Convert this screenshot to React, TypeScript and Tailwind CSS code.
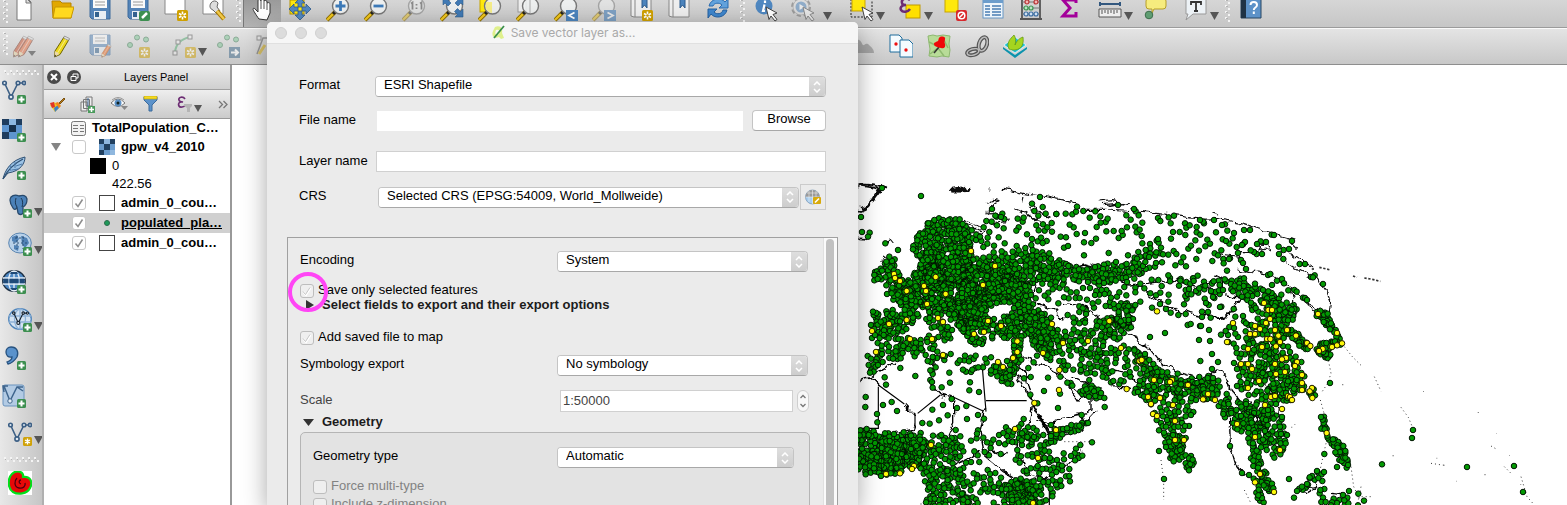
import React, { ReactNode } from "react";

/* ------------------------------------------------------------------ */
/* Map data                                                            */
/* ------------------------------------------------------------------ */

type Pt = [number, number];

function toPoints(flat: number[], dx = 0): Pt[] {
  const out: Pt[] = [];
  for (let i = 0; i < flat.length; i += 2) out.push([flat[i] + dx, flat[i + 1]]);
  return out;
}

function inside(x: number, y: number, poly: Pt[]): boolean {
  let hit = false;
  for (let i = 0, j = poly.length - 1; i < poly.length; j = i++) {
    const [xi, yi] = poly[i];
    const [xj, yj] = poly[j];
    if (yi > y !== yj > y && x < ((xj - xi) * (y - yi)) / (yj - yi) + xi) hit = !hit;
  }
  return hit;
}

function makeRandom(seed: number) {
  let s = seed;
  return () => {
    s = (s * 1664525 + 1013904223) % 4294967296;
    return s / 4294967296;
  };
}

const EAST = 1050;

/* Each region: outline, number of places, smallest spacing, x shift. */
const REGIONS: [number[], number, number, number?][] = [
  // Central and eastern Europe
  [[105, 345, 150, 335, 180, 310, 215, 290, 300, 280, 400, 280, 420, 290, 480, 310, 500, 350, 490, 380, 420, 400, 395, 420, 400, 445, 360, 490, 330, 470, 260, 420, 200, 420, 150, 400, 110, 375], 560, 5],
  [[212, 290, 212, 240, 260, 225, 300, 210, 350, 210, 365, 250, 400, 280, 300, 285], 110, 6],
  [[400, 255, 440, 260, 520, 250, 570, 238, 600, 260, 650, 285, 640, 340, 560, 330, 530, 350, 480, 350, 420, 300], 145, 7],
  [[420, 340, 520, 340, 545, 380, 520, 400, 560, 420, 590, 440, 600, 480, 560, 480, 510, 440, 480, 400, 430, 395], 130, 6],
  [[640, 285, 700, 290, 800, 285, 870, 280, 868, 318, 800, 330, 720, 335, 650, 320], 84, 7],
  // Turkey, Caucasus and Levant
  [[385, 450, 440, 450, 500, 430, 590, 440, 620, 490, 600, 540, 620, 590, 570, 550, 540, 500, 500, 500, 440, 500, 395, 505], 160, 6],
  [[485, 510, 512, 510, 505, 570, 485, 620], 24, 6],
  // Iberia and Italy
  [[63, 430, 180, 422, 205, 440, 170, 462, 150, 490, 100, 515, 65, 505], 72, 7],
  [[215, 425, 245, 425, 275, 455, 310, 485, 285, 518, 245, 475, 225, 465], 26, 6],
  [[320, 460, 365, 480, 405, 520, 370, 525, 340, 495], 28, 6],
  // British Isles
  [[100, 262, 130, 262, 150, 330, 130, 340, 105, 330], 30, 6],
  [[68, 305, 95, 290, 92, 330, 68, 330], 12, 6],
  // Scandinavia
  [[182, 215, 228, 160, 275, 140, 310, 145, 300, 175, 260, 230, 240, 290, 210, 290, 190, 250], 70, 7],
  [[285, 150, 340, 155, 370, 200, 345, 220, 280, 215, 270, 180], 42, 7],
  [[370, 205, 400, 160, 460, 135, 530, 150, 590, 160, 620, 180, 540, 250, 430, 255, 380, 240], 44, 12],
  // Siberia
  [[540, 95, 600, 120, 680, 112, 850, 122, 960, 140, 1080, 160, 1120, 300, 880, 290, 650, 240, 600, 190, 540, 140], 92, 11],
  [[1060, 150, 1180, 165, 1320, 205, 1300, 250, 1170, 250, 1160, 320, 1080, 310], 20, 18],
  // Kazakhstan and central Asia
  [[560, 330, 700, 335, 880, 320, 900, 350, 850, 400, 700, 430, 600, 410, 555, 380], 58, 11],
  [[760, 440, 810, 400, 860, 395, 850, 470, 800, 510, 750, 515], 62, 6],
  [[640, 410, 690, 420, 760, 460, 745, 510, 690, 500, 650, 460], 22, 8],
  // Iran and Pakistan
  [[580, 460, 630, 470, 690, 490, 750, 520, 755, 600, 680, 610, 630, 590, 560, 540], 74, 8],
  [[750, 510, 830, 510, 870, 545, 870, 590, 840, 645, 770, 650, 745, 580], 46, 8],
  // India and Sri Lanka
  [[840, 540, 880, 560, 930, 600, 1000, 620, 1080, 635, 1085, 690, 1040, 690, 920, 660, 880, 690, 850, 670, 870, 610], 135, 6],
  [[880, 670, 1040, 690, 1010, 770, 1000, 800, 930, 790, 905, 730], 56, 9],
  [[935, 790, 1000, 800, 1000, 830, 990, 870, 965, 872, 950, 840], 48, 6],
  [[1003, 853, 1018, 855, 1028, 880, 1012, 905, 1003, 890], 16, 5],
  // Western China and Mongolia
  [[890, 330, 960, 310, 1100, 340, 1180, 420, 1190, 480, 1100, 470, 1050, 460, 960, 440, 870, 440], 34, 15],
  [[950, 320, 1080, 320, 1130, 350, 1100, 380, 1000, 380], 28, 8],
  [[850, 260, 930, 200, 945, 240, 930, 290, 870, 300], 16, 9],
  // Eastern China
  [[60, 330, 110, 320, 180, 360, 240, 370, 290, 415, 270, 440, 160, 395, 90, 360], 74, 7, EAST],
  [[150, 400, 200, 390, 280, 420, 285, 440, 250, 480, 240, 520, 180, 560, 140, 520], 78, 8, EAST],
  [[70, 450, 140, 440, 150, 520, 130, 610, 100, 560, 60, 500], 20, 11, EAST],
  [[150, 520, 245, 515, 295, 570, 310, 650, 270, 690, 210, 695, 190, 620, 160, 580], 130, 7, EAST],
  [[100, 580, 190, 600, 210, 690, 150, 690, 110, 650], 34, 10, EAST],
  // Korea, Japan and Taiwan
  [[255, 480, 285, 485, 325, 530, 318, 545, 285, 515], 28, 6, EAST],
  [[345, 545, 360, 520, 400, 515, 405, 485, 425, 520, 390, 535, 380, 570, 352, 552], 46, 5, EAST],
  [[343, 424, 382, 425, 388, 450, 405, 488, 390, 480, 358, 445], 28, 6, EAST],
  [[324, 655, 338, 655, 342, 680, 322, 678], 7, 5, EAST],
  // South-east Asia
  [[0, 620, 50, 620, 60, 660, 40, 690, 0, 690], 36, 6, EAST],
  [[60, 670, 110, 700, 140, 690, 210, 720, 250, 770, 265, 820, 230, 862, 190, 830, 150, 820, 90, 750, 60, 720], 150, 6, EAST],
  [[143, 795, 158, 830, 188, 890, 222, 965, 195, 960, 155, 880], 42, 6, EAST],
  [[155, 925, 170, 925, 190, 1000, 175, 1000], 12, 8, EAST],
  [[358, 738, 372, 742, 383, 797, 415, 812, 448, 880, 438, 900, 400, 840, 364, 780], 40, 6, EAST],
  [[275, 980, 350, 905, 368, 912, 370, 1000, 355, 1000, 355, 920, 290, 985], 16, 8, EAST],
  [[385, 985, 420, 980, 570, 1000, 380, 1005], 12, 8, EAST],
  // Northern Africa
  [[40, 600, 75, 530, 150, 507, 250, 507, 258, 545, 200, 555, 140, 565, 90, 570, 50, 610], 70, 7],
  [[250, 548, 330, 560, 370, 552, 440, 572, 485, 570, 478, 600, 350, 605, 320, 585, 240, 568], 30, 8],
  [[430, 590, 485, 595, 480, 655, 440, 635], 18, 7],
  [[30, 610, 230, 570, 400, 610, 400, 780, 300, 790, 200, 770, 30, 770], 30, 20],
  [[230, 560, 255, 560, 250, 660, 235, 660], 9, 7],
  // Western Africa
  [[25, 775, 70, 792, 200, 795, 200, 880, 120, 908, 60, 918, 25, 895], 215, 6],
  [[190, 800, 310, 795, 330, 860, 290, 910, 220, 920, 190, 880], 84, 7],
  [[230, 905, 330, 900, 350, 1005, 225, 1005], 80, 7],
  // Eastern Africa
  [[330, 800, 430, 800, 520, 740, 545, 780, 520, 830, 400, 860, 340, 850], 38, 11],
  [[330, 860, 400, 880, 480, 930, 490, 1005, 330, 1005], 52, 9],
  [[470, 930, 540, 930, 560, 1005, 470, 1005], 84, 5],
  [[490, 770, 580, 770, 605, 850, 690, 835, 690, 870, 640, 940, 600, 1000, 560, 1000, 540, 930, 480, 870], 92, 8],
  // Arabia
  [[510, 570, 620, 600, 650, 640, 600, 720, 560, 720, 520, 670], 11, 20],
  [[640, 630, 690, 660, 720, 640, 758, 680, 745, 680, 700, 675], 24, 7],
  [[595, 765, 640, 775, 720, 755, 690, 780, 612, 810, 607, 845, 597, 830], 34, 6],
];

const LONE_PLACES: Pt[] = [
  ...toPoints([93, 54, 210, 78, 30, 141, 33, 186, 56, 188, 51, 200, 103, 220, 141, 240, 567, 81, 543, 101, 575, 111, 678, 110, 801, 105, 849, 117, 423, 117, 433, 137, 450, 141, 616, 132, 584, 131, 969, 137, 1047, 150, 924, 843, 939, 927, 723, 817, 688, 825, 694, 857, 657, 934, 761, 711, 760, 684, 715, 630, 755, 620, 690, 600, 232, 160, 250, 150, 384, 666, 276, 705, 318, 714, 348, 747, 621, 714, 692, 735, 897, 501, 942, 489, 1044, 510, 1010, 465, 1019, 462, 1047, 468, 982, 435, 1048, 573]),
  ...toPoints([39, 150, 63, 165, 147, 180, 219, 195, 273, 213, 99, 189, 132, 216, 195, 216, 168, 222, 75, 213, 123, 225, 183, 252, 159, 246, 149, 241, 234, 252, 247, 267, 248, 240, 264, 237, 296, 282, 312, 282, 341, 316, 330, 321, 336, 322, 366, 342, 111, 249, 120, 270, 126, 279, 135, 297, 84, 267, 201, 315, 208, 312, 228, 332, 243, 327, 249, 340, 213, 345, 262, 361, 280, 360, 287, 365, 306, 383, 312, 384, 318, 390, 387, 639, 360, 741, 243, 741, 636, 780, 633, 804, 543, 883, 798, 891, 939, 888, 966, 966, 472, 971, 444, 963, 426, 975, 370, 852, 408, 891, 348, 903, 369, 906, 333, 918, 318, 942, 87, 828, 123, 909, 264, 927, 144, 915, 33, 552, 51, 576, 99, 579, 33, 597, 27, 513, 24, 480, 0, 468, 21, 426, 57, 411, 15, 399, 36, 381, 326, 922, 303, 950, 288, 963], EAST),
];

const SELECTED_PLACES: Pt[] = [
  ...toPoints([360, 243, 432, 288, 129, 312, 132, 324, 147, 333, 254, 321, 219, 348, 225, 363, 167, 363, 284, 372, 396, 345, 228, 402, 261, 444, 276, 456, 167, 450, 114, 462, 63, 483, 177, 507, 243, 507, 75, 546, 276, 555, 411, 453, 450, 468, 369, 492, 399, 486, 499, 514, 499, 546, 486, 564, 441, 576, 456, 591, 576, 549, 636, 519, 711, 513, 603, 462, 625, 600, 624, 660, 550, 699, 775, 453, 810, 534, 865, 573, 872, 570, 918, 424, 909, 630, 963, 630, 957, 636, 1011, 645, 827, 657, 891, 681, 927, 684, 900, 702, 966, 705, 906, 732, 918, 738, 972, 753, 1056, 687, 1071, 672, 972, 810, 999, 810, 492, 777, 615, 780, 561, 864, 240, 825, 105, 912, 147, 910, 189, 888, 183, 897, 546, 999]),
  ...toPoints([189, 399, 202, 420, 213, 420, 207, 447, 195, 459, 162, 468, 177, 477, 222, 480, 258, 480, 96, 459, 147, 492, 162, 492, 232, 497, 285, 497, 198, 507, 208, 507, 237, 516, 78, 516, 183, 531, 225, 529, 141, 537, 318, 519, 328, 528, 255, 564, 243, 568, 288, 576, 282, 588, 120, 582, 141, 582, 222, 582, 153, 597, 252, 606, 225, 612, 303, 615, 174, 633, 303, 639, 141, 654, 303, 660, 210, 681, 222, 678, 261, 678, 267, 681, 273, 690, 192, 705, 243, 717, 333, 654, 326, 664, 334, 684, 351, 432, 408, 489, 423, 520, 408, 526, 393, 531, 365, 537, 354, 543, 21, 672, 6, 688, 42, 690, 108, 762, 162, 801, 237, 840, 177, 912, 162, 937, 219, 966, 377, 789], EAST),
];

function buildPlaces(): Pt[] {
  const rnd = makeRandom(54009);
  const out: Pt[] = [];
  for (const [flat, count, gap, dx] of REGIONS) {
    const poly = toPoints(flat, dx ?? 0);
    const xs = poly.map((p) => p[0]);
    const ys = poly.map((p) => p[1]);
    const x0 = Math.min(...xs);
    const x1 = Math.max(...xs);
    const y0 = Math.min(...ys);
    const y1 = Math.max(...ys);
    // small, narrow regions keep a crisp edge; large ones get a ragged one
    const spread = Math.min(22, (x1 - x0) / 8);
    const here: Pt[] = [];
    for (let tries = 0; tries < count * 20 && here.length < count; tries++) {
      const x = x0 + rnd() * (x1 - x0);
      const y = y0 + rnd() * (y1 - y0);
      if (!inside(x, y, poly)) continue;
      const px = Math.round(x + (rnd() - 0.5) * spread);
      const py = Math.round(y + (rnd() - 0.5) * spread);
      if (here.some(([a, b]) => (a - px) ** 2 + (b - py) ** 2 < gap * gap)) continue;
      here.push([px, py]);
    }
    out.push(...here);
  }
  return out;
}

const PLACES = [...buildPlaces(), ...LONE_PLACES];

function MapView() {
  return (
    <svg
      width="1336"
      height="440"
      viewBox="-1857 -315 4008 1320"
      className="block shrink-0"
      role="img"
      aria-label="World map of populated places"
    >
      <defs>
        <filter id="ragged" x="-1857" y="-315" width="4008" height="1320" filterUnits="userSpaceOnUse">
          <feTurbulence type="fractalNoise" baseFrequency="0.035" numOctaves="3" seed="7" result="n" />
          <feDisplacementMap in="SourceGraphic" in2="n" scale="26" xChannelSelector="R" yChannelSelector="G" />
        </filter>
      </defs>
      {/* straight desert borders */}
      <path d="M82 650v125H25M82 645l78 57M192 730v45M268 675l-68 55M300 678l96 45M393 580l12 145M405 692h122M595 930v75" fill="none" stroke="#000" strokeWidth="3.500" />
      <g fill="none" stroke="#000" strokeWidth="4" strokeLinejoin="round" filter="url(#ragged)">
        {/* country borders */}
        <path d="M160 702l30 32M268 675l34 8M192 760l-4 15-60 10M268 675l-28-30 8-90M308 680v75l-20 45M405 715l-6 10-12 60 14 70 60 50 30 20M310 885l50-25 30-20M405 855l10-12 40 14 15-10M25 632l35-8 25-20 50-30M60 625l25 25" />
        <path d="M495 560l30 60 20 80 40 70 20 40M510 560l70 30 50 20 50 80 40-10v40l-28 15-55 10-30 15-45-2M640 630l40 35 25 20M490 600l60 110 45 90M692 735l12 30-14 20M600 805l80-20 60-65M545 930l30 5 70-50 45-40M545 700l-10 60-40 70 40 85 60 15" />
        <path d="M555 345l-12 30 20 30M560 400l50 20 20 30M640 400l60 10 60 45M625 445l15 5 5-15zM650 300l50-15 70 20 60 40 60-5 70-10 80 20 40-10M850 350l30 10 60 45 70 25 70 14 60-8M830 490l60 40 40 50 50 25 60 20 45 2M745 530l25 65 40 10 45 25M870 660l-30-50M750 595l35 40M660 620l90 35M780 650l60 5" />
        <path d="M1070 630l30-30 25 10 15 50 30 40M1050 355l35-5M1095 315l20 10v25M1120 375l50 10-40 55-60 5M1250 420l5-40M1190 700l30 60M1135 720l3 110 15 50 25 40M1350 960l40-8 10-30M1340 960l30 8 20-12M1440 970l40 5" />
      </g>
      <g fill="none" stroke="#111" strokeWidth="3.500" strokeLinejoin="round" filter="url(#ragged)">
        {/* coasts */}
        <path d="M25 42l45 4 36 8-24 6-18 28-22 24-17 12M25 46l60 10M88 60l-30 40-28 14M25 122l20-8 16-20M25 205l18 2 14-14" strokeWidth="5" />
        <path d="M300 60l22-4 14 6 20-6M320 54l32 8M326 64l18-8M310 62l36-4" strokeWidth="6" />
        <path d="M410 56l8 8M455 58l60 12 60 8 70 14 22 8 20 16M516 78l-4 26M405 100l22-12 14 4-26 16-4 18 24 12 26 6M490 116l40 18 40 26M508 120l45 32M535 118l22 6 42 18M330 150l68 24-8 16-60-14M340 160l44 22M420 160l60-10M545 100l28 30 24 6" />
        <path d="M746 96l36-4 58 10M756 104l50-4M775 108l44-8M700 118l64 0M768 120l90 6 60 4M840 120l78 10 80 10 50 8M1050 148l50-2 60 10 110 36 60 18M1084 132l20 6M1316 216l20 20M1160 248h40M1216 222l40 26-5-24zM1295 235l45 30 48 28M1296 272l60 34 42 20 18 22M1412 345l20 25 10 20-4 42-18 12" />
        <path d="M1110 252l56 8 20 40 70 14 50 30 66 60 30 10M1166 300l40 8M1092 318l60 20M1318 362l20 66-14 10M1400 430l-30-24M1284 700l-4 34 16 10" />
        <path d="M92 268l14-6M96 258l20 14M100 276l-12-4M98 220l16-10 10 12M215 180l20 50-10 50M260 150l-40 70" />
      </g>
      <g fill="none" stroke="#333" strokeWidth="3">
        <path d="M1405 292l34 8M1506 318l12 4M1540 324l24 4 24 6" strokeDasharray="7 5" strokeWidth="5" />
        <path d="M1480 530l24 30 26 26M1570 620l20 44M1650 712l22 30 16 38M1430 560l10 50-10 30-20 30M1134 770l6 70 20 50M1408 690l14 50M1500 890l8 60 20 40M930 870l8 60v60M1530 950l-10 50M2010 920l18 60 22 25M640 815h80M1920 828l14 8M1740 880l40 6M1180 960l20 40M1520 980h40M1960 890l20 20M1425 820l-20 90" strokeDasharray="3 9" />
      </g>
      <g fill="#888">
        <path d="M1473 642h4v4h-4zM1716 663h3v3h-3zM1880 726h4v3h-4zM1624 856h5v3h-5zM1776 884h5v3h-5zM1900 912h4v4h-4zM1756 863h3v3h-3zM1935 790h2v2h-2zM1815 932h2v3h-2zM2007 942h4v2h-4zM1974 856h3v2h-3zM1320 770h4v3h-4zM1330 762h3v3h-3zM208 1000h4v4h-4z" />
      </g>
      <g fill="#029a02" stroke="#031503" strokeWidth="3">
        {PLACES.map(([x, y], i) => (
          <circle key={i} cx={x} cy={y} r="8.3" />
        ))}
      </g>
      {/* borders that stay visible over crowded areas */}
      <g fill="none" stroke="#061006" strokeWidth="4" opacity="0.75" filter="url(#ragged)">
        <path d="M215 300l30-20 20 10 20 30-10 30-30 10-20-20zM260 330l60 10 30-20 40 30-20 40-50 10-40-20M180 360l40 20-10 30M300 250l40 10 20 30-30 20M380 380l60-10 40 20M450 300l50 40 40-10M240 230l20 60M290 400l40 40 50 10M330 430l20 50M120 850l10 60M160 800v90M85 810l10 90M50 850l40-5M230 820l-30 70M500 930l30 30-20 30M900 610l80 25 80 10M960 660l30 30M1180 720l40 20 30 50M1200 620l60 40M780 450l30 20 40-10M790 440l10 40" />
      </g>
      <g fill="#fdf90a" stroke="#201c00" strokeWidth="3">
        {SELECTED_PLACES.map(([x, y], i) => (
          <circle key={i} cx={x} cy={y} r="8.3" />
        ))}
      </g>
    </svg>
  );
}

/* ------------------------------------------------------------------ */
/* Icons (24 x 24)                                                     */
/* ------------------------------------------------------------------ */

function Icon({ children, faded = false }: { children: ReactNode; faded?: boolean }) {
  return (
    <svg width="24" height="24" viewBox="0 0 24 24" fill="none" aria-hidden="true" className={faded ? "shrink-0 opacity-50" : "shrink-0"}>
      {children}
    </svg>
  );
}

const Plus = ({ x = 15, y = 15 }: { x?: number; y?: number }) => (
  <g>
    <rect x={x} y={y} width="9" height="9" rx="1.5" fill="#3d8f50" />
    <path d={`M${x + 4.5} ${y + 1.5}v6M${x + 1.5} ${y + 4.5}h6`} stroke="#fff" strokeWidth="2" />
  </g>
);

const Star = ({ x = 13, y = 13 }: { x?: number; y?: number }) => (
  <g>
    <rect x={x} y={y} width="11" height="11" rx="1.5" fill="#cfa000" />
    <path
      d={`M${x + 5.5} ${y + 1.5}v8M${x + 2} ${y + 3.5}l7 4M${x + 9} ${y + 3.5}l-7 4`}
      stroke="#fff"
      strokeWidth="1.6"
    />
    <circle cx={x + 5.5} cy={y + 5.5} r="1.3" fill="#cfa000" />
  </g>
);

const Floppy = () => (
  <g>
    <path d="M2 1h20v20H4l-2-2z" fill="#5484b8" stroke="#3d6a9c" />
    <rect x="5" y="1" width="14" height="9" fill="#fafafa" />
    <path d="M7 4h10M7 7h10" stroke="#9a9a9a" />
    <rect x="6" y="13" width="12" height="8" fill="#e8eef4" />
    <rect x="7" y="14" width="4" height="5" fill="#33628f" />
  </g>
);

const Lens = ({ children }: { children?: ReactNode }) => (
  <g>
    <path d="M9 14l-8 8" stroke="#8b6a00" strokeWidth="4" />
    <path d="M8 15l-7 7" stroke="#f2c81e" strokeWidth="2.4" />
    <path d="M10 13l-3 3" stroke="#222" strokeWidth="3" />
    <circle cx="14.5" cy="8" r="8" fill="#f1f3f3" fillOpacity="0.85" stroke="#777" strokeWidth="1.4" />
    {children}
  </g>
);

const Cursor = () => <path d="M12 9l11 6-4 1.5 4 5-2 1.5-4-5-2 3.5z" fill="#fff" stroke="#444" />;

const Pencil = ({ fill, edge }: { fill: string; edge: string }) => (
  <g>
    <path d="M14 3l5 2.500-9 15-5.500 2.500.5-6z" fill={fill} stroke={edge} />
    <path d="M16.500 4L7.500 19" stroke="#fff" strokeOpacity="0.5" />
    <path d="M14.500 2l5 2.500-1 2-5-2.500z" fill="#ddd" stroke="#777" strokeWidth="0.6" />
    <path d="M5 17l4.500 3L4.500 23z" fill="#ecd9a8" />
    <path d="M4.700 20.500L4.500 23l2-1z" fill="#333" />
  </g>
);

const VNodes = ({ stroke = "#3c5f85" }: { stroke?: string }) => (
  <g stroke={stroke} strokeWidth="1.6" fill="#dfe8f0">
    <path d="M2.500 3l6.500 14L16 3h6" fill="none" />
    <circle cx="2.500" cy="3" r="1.800" />
    <circle cx="16" cy="3" r="1.800" />
    <circle cx="22" cy="3" r="1.600" />
    <circle cx="9" cy="17" r="2.100" />
  </g>
);

const Checker = () => (
  <g>
    <rect x="0" y="1" width="20" height="20" fill="#5e95cf" />
    <path d="M7 1h7v6H7z" fill="#8db8e2" />
    <path d="M0 1h7v6H0zM14 1h6v6h-6zM0 14h7v7H0z" fill="#1f3d5e" />
    <path d="M7 7h7v7H7z" fill="#16304c" />
    <path d="M0 7h7v7H0zM7 14h7v7H7z" fill="#5e95cf" />
  </g>
);

const GlobeGrid = ({ fill, line, edge }: { fill: string; line: string; edge: string }) => (
  <g stroke={line} strokeWidth="1.300">
    <ellipse cx="12" cy="11" rx="11.300" ry="10.300" fill={fill} stroke={edge} />
    <path d="M1 8h22M1 14h22M12 1v20" />
    <ellipse cx="12" cy="11" rx="5.500" ry="10" fill="none" />
  </g>
);

const Caret = () => (
  <svg width="9" height="8" viewBox="0 0 9 8" aria-hidden="true" className="shrink-0">
    <path d="M0 0h9L4.500 8z" fill="#555" />
  </svg>
);

/* ------------------------------------------------------------------ */
/* Toolbars                                                            */
/* ------------------------------------------------------------------ */

function Tool({ label, children, faded, active }: { label: string; children: ReactNode; faded?: boolean; active?: boolean }) {
  return (
    <button
      type="button"
      aria-label={label}
      className={
        active
          ? "flex h-full w-[38px] shrink-0 items-end justify-center border-l border-[#777] bg-gradient-to-b from-[#9a9a9a] to-[#b4b4b4] pb-[5px]"
          : "flex h-full w-[38px] shrink-0 items-end justify-center pb-[5px]"
      }
    >
      <Icon faded={faded}>{children}</Icon>
    </button>
  );
}

const DROP_SIZES = {
  normal: "flex h-full w-12 shrink-0 items-end gap-0.5 pb-[5px] pl-2.5",
  wide: "flex h-full w-[55px] shrink-0 items-end gap-2 pb-[5px] pl-1.5",
  inset: "flex h-full w-[52px] shrink-0 items-end gap-0.5 pb-[5px] pl-[15px]",
};

function DropTool({ label, children, faded, size = "normal" }: { label: string; children: ReactNode; faded?: boolean; size?: keyof typeof DROP_SIZES }) {
  return (
    <button type="button" aria-label={label} className={DROP_SIZES[size]}>
      <Icon faded={faded}>{children}</Icon>
      <span className="pb-0.5">
        <Caret />
      </span>
    </button>
  );
}

function GripV() {
  return (
    <svg width="10" height="28" viewBox="0 0 10 28" aria-hidden="true" className="shrink-0">
      {[2, 8, 14, 20].map((y) => (
        <g key={y}>
          <rect x="3" y={y - 2} width="2" height="2" fill="#f4f4f4" />
          <rect x="6" y={y + 1} width="2" height="2" fill="#f4f4f4" />
          <rect x="4" y={y - 1} width="2" height="1" fill="#b4b4b4" />
        </g>
      ))}
    </svg>
  );
}

function GripH() {
  return (
    <svg width="38" height="8" viewBox="0 0 38 8" aria-hidden="true" className="shrink-0">
      {[1, 7, 13, 19, 25, 31].map((x) => (
        <g key={x}>
          <rect x={x + 1} y="1" width="2" height="2" fill="#f4f4f4" />
          <rect x={x + 4} y="4" width="2" height="2" fill="#f4f4f4" />
          <rect x={x + 2} y="3" width="1" height="1" fill="#b4b4b4" />
        </g>
      ))}
    </svg>
  );
}

function MainToolbar() {
  return (
    <div role="toolbar" aria-label="Main" className="flex h-7 shrink-0 items-end overflow-hidden border-b border-[#9b9b9b] bg-gradient-to-b from-[#d6d6d6] to-[#c6c6c6]">
      <div className="flex h-full w-[5px] shrink-0"><GripV /></div>
      <Tool label="New project">
        <path d="M5 0h10l4 4v18H5z" fill="#fff" stroke="#777" />
        <path d="M14 0v5h5z" fill="#ddd" stroke="#777" />
      </Tool>
      <Tool label="Open project">
        <path d="M2 3h8l2 2h9v15H3z" fill="#e2a800" stroke="#b98500" />
        <path d="M5 9h19l-3 11H3z" fill="#ffd91f" stroke="#c99700" />
      </Tool>
      <Tool label="Save project"><Floppy /></Tool>
      <Tool label="Save project as">
        <Floppy />
        <rect x="13" y="13" width="11" height="10" rx="2" fill="#3d8f50" />
        <path d="M16 20l5-5" stroke="#fff" strokeWidth="2.500" />
      </Tool>
      <Tool label="New print layout">
        <path d="M1 0h20v16H1z" fill="#fff" stroke="#888" />
        <Star x={13} y={12} />
      </Tool>
      <Tool label="Layout manager">
        <path d="M1 0h20v16H1z" fill="#fff" stroke="#888" />
        <path d="M9 5a4 4 0 0 1 7 0l-1 4 3 4-3 3-4-4c-3-1-4-4-2-7z" fill="#ddd" stroke="#666" />
        <path d="M15 13l7 8" stroke="#a97b00" strokeWidth="4.500" />
        <path d="M15 13l7 8" stroke="#f0c84a" strokeWidth="2.500" />
      </Tool>
      <GripV />
      <Tool label="Pan map" active>
        <path d="M8 21c-3-4-6-9-6-10s2-1 3 1l2 2V3c0-2 2-2 3 0V1c0-1 3-1 3 0v2c1-1 3-1 3 1v1c2-1 3 0 3 1v9l-3 7z" fill="#fff" stroke="#333" />
        <path d="M10 3v8M13 3v8M16 5v7" stroke="#555" />
      </Tool>
      <Tool label="Pan to selection">
        <rect x="2" y="2" width="14" height="14" fill="#ffe80c" stroke="#b39200" />
        <g transform="translate(1 0)" fill="#5288c0" stroke="#2d5b8c" strokeWidth="0.800">
          <path d="M11 0l5 5h-3v4H9V5H6zM11 22l5-5h-3v-4H9v4H6zM0 11l5-5v3h4v4H5v3zM22 11l-5-5v3h-4v4h4v3z" />
        </g>
      </Tool>
      <Tool label="Zoom in"><Lens><path d="M14.500 3v10M9.500 8h10" stroke="#3d7ab8" strokeWidth="2.800" /></Lens></Tool>
      <Tool label="Zoom out"><Lens><path d="M9.500 8h10" stroke="#3d7ab8" strokeWidth="2.800" /></Lens></Tool>
      <Tool label="Zoom to native resolution" faded>
        <Lens>
          <path d="M9 5.500l1.500-1V11.500M18 5.500l1.500-1V11.500M14.500 6v1.500M14.500 9.500v1.500" stroke="#444" strokeWidth="1.800" />
        </Lens>
      </Tool>
      <Tool label="Zoom full">
        <Lens />
        <path d="M3 0h7l-2 2 3 3-3 3-3-3-2 2zM23 0v7l-2-2-3 3-3-3 3-3-2-2zM23 19h-8l2.500-2.500-3-3 3-3 3 3L23 11z" fill="#4079b4" stroke="#2c5a8a" strokeWidth="0.600" />
      </Tool>
      <Tool label="Zoom to selection"><rect x="2" y="0" width="8" height="14" fill="#ffe80c" stroke="#c5a400" /><Lens><path d="M8 4h6v11a8 8 0 0 1-6-5z" fill="#f4ec8a" /></Lens></Tool>
      <Tool label="Zoom to layer"><rect x="2" y="0" width="8" height="14" fill="#eee" stroke="#999" /><Lens><path d="M14 1v14" stroke="#aaa" /></Lens></Tool>
      <Tool label="Zoom last"><Lens /><rect x="12" y="12" width="12" height="11" fill="#4c84bd" /><path d="M20.500 14.500L15 17.500l5.500 3" stroke="#fff" strokeWidth="1.800" /></Tool>
      <Tool label="Zoom next" faded><Lens /><rect x="12" y="12" width="12" height="11" fill="#2f73b8" /><path d="M15.500 14.500l5.500 3-5.500 3" stroke="#fff" strokeWidth="1.800" /></Tool>
      <Tool label="New bookmark"><path d="M1 0h20v19H4l-3-1z" fill="#eee" stroke="#888" /><path d="M5 0v19" stroke="#888" /><path d="M12 0h5v10l-2.500-3L12 10z" fill="#4c84bd" stroke="#2d5b8c" /><Star x={12} y={12} /></Tool>
      <Tool label="Show bookmarks"><path d="M1 0h20v19H4l-3-1z" fill="#eee" stroke="#888" /><path d="M5 0v19" stroke="#888" /><path d="M12 0h5v10l-2.500-3L12 10z" fill="#4c84bd" stroke="#2d5b8c" /></Tool>
      <Tool label="Refresh">
        <path d="M3 8c2-8 12-9 16-4l3-3v9h-9l3-3c-3-3-8-2-9 1z" fill="#62a2dc" stroke="#2b6cb0" />
        <path d="M21 12c-2 8-12 9-16 4l-3 4v-9h9l-3 3c3 3 8 2 9-2z" fill="#3f86cc" stroke="#2560a0" />
      </Tool>
      <GripV />
      <Tool label="Identify features"><circle cx="10" cy="8" r="8.500" fill="#4f87c0" /><path d="M11 2.500v2.500M10.500 6.500L9 13h2" stroke="#fff" strokeWidth="2.200" /><Cursor /></Tool>
      <DropTool label="Run feature action" size="wide" faded>
        <circle cx="10" cy="9" r="8.500" fill="#ddd" stroke="#666" strokeWidth="3" strokeDasharray="4 2.700" />
        <circle cx="10" cy="9" r="8" fill="#e2e2e2" stroke="#888" strokeWidth="0.800" />
        <circle cx="10" cy="9" r="5.500" fill="#4f87c0" />
        <path d="M8.500 6l5 3-5 3z" fill="#fff" />
        <Cursor />
      </DropTool>
      <DropTool label="Select features"><path d="M1 0h21v19H1z" stroke="#222" strokeDasharray="2 1.500" /><rect x="2" y="0" width="13" height="13" fill="#ffe80c" stroke="#c9a500" /><Cursor /></DropTool>
      <DropTool label="Select by expression"><rect x="8" y="7" width="14" height="13" fill="#ffe000" stroke="#c09a00" /><path d="M12 2C8-1 3 1 4 5c0 2 2 2 4 2-5 0-6 3-5 5 2 3 7 2 9-1" stroke="#6c2c73" strokeWidth="2.500" /></DropTool>
      <Tool label="Deselect features"><rect x="2" y="0" width="13" height="14" fill="#ffe80c" stroke="#c9a500" /><rect x="13" y="12" width="11" height="11" rx="2" fill="#d8282c" /><circle cx="18.500" cy="17.500" r="3.300" stroke="#fff" strokeWidth="1.500" /><path d="M16 20l5-5" stroke="#fff" strokeWidth="1.500" /></Tool>
      <Tool label="Open attribute table"><rect x="2" y="0" width="20" height="20" fill="#eef5fb" stroke="#6796c4" /><path d="M2 1h20v4H2z" fill="#6c9dcc" /><path d="M4 8h5M11 8h9M4 11h5M11 11h9M4 14h5M11 14h9M4 17h5M11 17h9" stroke="#4a7eb4" strokeWidth="1.300" /></Tool>
      <Tool label="Field calculator"><path d="M3 0v20M21 0v20M1 21h22" stroke="#555" strokeWidth="1.800" /><path d="M3 4h18M3 10h18M3 16h18" stroke="#777" /><g strokeWidth="1.200"><circle cx="8" cy="4" r="2" fill="#f5b5b5" stroke="#b83434" /><circle cx="17" cy="4" r="2" fill="#f5b5b5" stroke="#b83434" /><circle cx="7" cy="10" r="2" fill="#b9e6c3" stroke="#3f9553" /><circle cx="12" cy="10" r="2" fill="#b9e6c3" stroke="#3f9553" /><circle cx="7" cy="16" r="2" fill="#cfe0f2" stroke="#3d6fa3" /><circle cx="12" cy="16" r="2" fill="#cfe0f2" stroke="#3d6fa3" /><circle cx="17" cy="16" r="2" fill="#cfe0f2" stroke="#3d6fa3" /></g></Tool>
      <Tool label="Statistical summary"><path d="M19 5V2H6l7 8-7 8h13v-4" stroke="#a3009a" strokeWidth="3" /></Tool>
      <DropTool label="Measure line"><path d="M2 6h20M2 4v4M22 4v4" stroke="#33587f" strokeWidth="2" /><path d="M1 11h22v8H1z" fill="#eee" stroke="#555" /><path d="M4 12v4M7 12v3M10 12v4M13 12v3M16 12v4M19 12v3" stroke="#555" /></DropTool>
      <Tool label="Map tips"><path d="M6 0h14q3 0 3 3v5q0 3-3 3h-9l-2 4v-4H6q-3 0-3-3V3q0-3 3-3z" fill="#f6ec7e" stroke="#b69e28" /><circle cx="6" cy="17" r="3.800" fill="#5f9d72" stroke="#3d6d4b" /></Tool>
      <DropTool label="Text annotation"><path d="M2 0h20v16H9l-7 6 2-6H2z" fill="#edf2f6" stroke="#999" /><path d="M7 4h10M7 3v4M17 3v4M12 4v9M10 13h4" stroke="#333" strokeWidth="1.800" /></DropTool>
      <GripV />
      <Tool label="Help"><path d="M2 0h20v20H2z" fill="#5d92c8" stroke="#294663" /><path d="M2 0h5v20H2z" fill="#1f3346" /><path d="M11.500 7c0-4 6.500-4 6.500 0 0 3-3.200 2-3.200 5M14.800 13.500v2.500" stroke="#fff" strokeWidth="2" /></Tool>
    </div>
  );
}

function EditToolbar() {
  return (
    <div role="toolbar" aria-label="Digitizing" className="flex h-[37px] shrink-0 items-end overflow-hidden border-t border-b border-t-[#fafafa] border-b-[#8e8e8e] bg-gradient-to-b from-[#e4e4e4] to-[#c8c8c8] pb-px">
      <div className="flex h-full w-[5px] shrink-0 items-center"><GripV /></div>
      <Tool label="Current edits" faded>
        <g transform="translate(-3 0)"><Pencil fill="#c8502c" edge="#7c3522" /></g>
        <g transform="translate(2 0)"><Pencil fill="#e86c3c" edge="#7c3522" /></g>
        <path d="M16 17h8l-4 5z" fill="#333" />
      </Tool>
      <Tool label="Toggle editing"><Pencil fill="#ecd81c" edge="#6e6400" /></Tool>
      <Tool label="Save layer edits" faded><Floppy /><g transform="translate(11 9) scale(0.620)"><Pencil fill="#f06a20" edge="#a04000" /></g></Tool>
      <Tool label="Add feature" faded><g fill="#7cc795" stroke="#3e7a53"><circle cx="4" cy="11" r="2.500" /><circle cx="11" cy="3.500" r="2.500" /><circle cx="20" cy="5.500" r="2.500" /></g><Star /></Tool>
      <DropTool label="Add circular string" size="inset" faded><path d="M3 18C4 9 9 5 18 3" stroke="#4fa76c" strokeWidth="2" /><g fill="#eee" stroke="#555"><rect x="1" y="17" width="4" height="4" /><rect x="4" y="6" width="4" height="4" /><rect x="16" y="1" width="4" height="4" /></g><Star /></DropTool>
      <Tool label="Move feature" faded><g fill="#7cc795" stroke="#3e7a53"><circle cx="4" cy="11" r="2.500" /><circle cx="11" cy="3.500" r="2.500" /><circle cx="20" cy="5.500" r="2.500" /></g><rect x="13" y="13" width="11" height="11" fill="#3c6688" /><path d="M15 18.500h7M19 15.500l3 3-3 3" stroke="#fff" strokeWidth="2" /></Tool>
      <Tool label="Node tool" faded><path d="M3 20L9 4h10" stroke="#555" strokeWidth="1.500" /><rect x="3" y="2" width="4" height="4" fill="#eee" stroke="#555" /><path d="M5 20l6-9" stroke="#e0b200" strokeWidth="3" /></Tool>
      <div className="w-[559px] shrink-0" />
      <Tool label="Raster stretch" faded><path d="M1 19c0-10 4-14 7-13s3 6 5 5 3-2 5 0 5 4 5 8z" fill="#777" /></Tool>
      <Tool label="Georeferencer"><g fill="#f4fbff" stroke="#1f6d9c"><path d="M1 1h9l3 3v14H1z" /><path d="M11 6h9l4 4v13H11z" /></g><circle cx="7" cy="10" r="1.700" fill="#e11" /><circle cx="17" cy="16" r="1.700" fill="#e11" /></Tool>
      <Tool label="Coordinate capture"><path d="M1 2l5-1 4 1 6-1 7 1-1 8 1 6-1 7-7-1-5 1-8-1 1-7-1-6z" fill="#b8dc98" stroke="#8db870" /><path d="M3 20l8-6 6 8M16 4l5 10M2 8l6 3" stroke="#8fba70" strokeWidth="1.500" /><path d="M12 13l-5 6" stroke="#333" strokeWidth="1.500" /><path d="M13 3c2-1 6 0 5 2 0 2-1 3 0 5 1 3-1 5-4 4s-7-1-7-4c0-2 3-2 4-3s0-3 2-4z" fill="#f00808" /></Tool>
      <Tool label="Topology checker"><g stroke="#555" strokeWidth="4"><ellipse cx="8" cy="18" rx="6" ry="3" transform="rotate(-15 8 18)" /><ellipse cx="18" cy="10" rx="4" ry="7" transform="rotate(18 18 10)" /></g><g stroke="#bbb" strokeWidth="1.600"><ellipse cx="8" cy="18" rx="6" ry="3" transform="rotate(-15 8 18)" /><ellipse cx="18" cy="10" rx="4" ry="7" transform="rotate(18 18 10)" /></g></Tool>
      <Tool label="Offline editing"><path d="M0 13l12 8 12-8v2l-12 9-12-9z" fill="#0c93ad" /><path d="M1 11L12 3l11 8-11 8z" fill="#21c2dc" stroke="#fff" strokeWidth="0.700" /><path d="M6 15C3 9 7 5 11 1c2 3 2 6 1 10 2-5 5-7 8-8 1 7-1 12-8 13-2 0-4 0-6-1z" fill="#a5d51f" stroke="#5f9510" strokeWidth="0.700" /></Tool>
    </div>
  );
}

function SideTool({ label, children, drop }: { label: string; children: ReactNode; drop?: boolean }) {
  return (
    <button type="button" aria-label={label} className={drop ? "flex h-[38px] shrink-0 items-center gap-0.5 pl-2" : "flex h-[38px] shrink-0 items-center pl-0.5"}>
      <Icon>{children}</Icon>
      {drop && <span className="pt-3"><Caret /></span>}
    </button>
  );
}

function SideToolbar() {
  return (
    <div role="toolbar" aria-label="Manage layers" className="flex w-11 shrink-0 flex-col overflow-hidden border-r-2 border-[#b0b0b0] bg-gradient-to-r from-[#e8e8e8] to-[#c6c6c6] pt-1">
      <div className="flex h-1 shrink-0 items-start pl-0.5"><GripH /></div>
      <SideTool label="Add vector layer"><VNodes /><Plus /></SideTool>
      <SideTool label="Add raster layer"><Checker /><Plus /></SideTool>
      <SideTool label="Add SpatiaLite layer"><path d="M1 23C3 14 9 4 23 1c0 6-4 14-17 16z" fill="#9cc3e6" stroke="#2e4f72" /><path d="M1 23C6 13 13 7 21 3" stroke="#2e4f72" strokeWidth="1.300" /><path d="M8 9l1 6M13 6v6M10 14l6-1M14 10l6-2" stroke="#4c7aa8" /><Plus /></SideTool>
      <SideTool label="Add PostGIS layer" drop><path d="M3 3c3-3 6-2 8-1 4-1 7-1 8 3 0 4-2 7-4 8v6c-1 2-4 2-5 0l-1-6c-1 3-3 3-4 1C3 11 1 6 3 3z" fill="#4b81b8" stroke="#27496c" strokeWidth="1.300" /><path d="M8 4c-1 4-1 6 1 9M13 4c2 2 2 6 1 9" stroke="#1d3854" /><Plus /></SideTool>
      <SideTool label="Add MSSQL layer" drop><ellipse cx="12" cy="11" rx="11.300" ry="10" fill="#b7d0e9" stroke="#5b86b2" /><path d="M4 5l5-2 2 4-3 4-4-2zM13 4l6 2 2 5-4 5-3-4zM6 13l5 1-1 5-4-2z" fill="#5182b6" /><path d="M7 6h9M5 11h14M9 4v13M15 4v13" stroke="#2b4e74" strokeDasharray="2 2" /><Plus /></SideTool>
      <SideTool label="Add WMS layer"><GlobeGrid fill="#4d88c4" line="#e8f0f8" edge="#1d2f42" /><path d="M2 8.700h4.500v4.600H2zM7.500 8.700h9v4.600h-9zM17.500 8.700H22v4.600h-4.500zM9 2h6l1 2H8zM8 18h8l-2 2h-4z" fill="#1f4a78" /><Plus /></SideTool>
      <SideTool label="Add WFS layer" drop><GlobeGrid fill="#d4e3f2" line="#8fb3d8" edge="#4e84bb" /><g transform="translate(4 3) scale(0.700)"><VNodes stroke="#16222f" /></g><Plus /></SideTool>
      <SideTool label="Add delimited text layer"><path d="M9 1c6 0 8 5 6 10-2 3-4 6-9 7l-1-2c3-1 5-3 5-5-4 1-6-2-6-5 0-3 2-5 5-5z" fill="#5a92cc" stroke="#27527f" strokeWidth="1.300" /><Plus /></SideTool>
      <SideTool label="Add virtual layer"><rect x="1" y="1" width="21" height="21" rx="2" fill="#b3cbe4" stroke="#6a93bd" /><path d="M2 2l6 15L15 3h6M2 8l-1-6h5M15 3l6 4" stroke="#3f658d" strokeWidth="1.500" /><circle cx="8" cy="17" r="2.200" fill="#e6eef6" stroke="#3f658d" /><Plus /></SideTool>
      <SideTool label="New shapefile layer" drop><VNodes /><rect x="15" y="15" width="9" height="9" rx="1.500" fill="#d0a208" /><path d="M19.500 16.500v6M17 18l5 3M22 18l-5 3" stroke="#fff" strokeWidth="1.400" /></SideTool>
      <div className="flex h-3.5 shrink-0 items-center pl-0.5"><GripH /></div>
      <button type="button" aria-label="Heatmap" className="flex h-8 shrink-0 items-center pl-2">
        <Icon><rect width="24" height="24" fill="#fff" /><path d="M4 3c5-5 12-2 11 3 8-1 10 6 7 11-3 6-12 7-17 4C0 18-1 8 4 3z" fill="#e60808" stroke="#00e01a" strokeWidth="2.200" /><path d="M9 7c-3 3-3 9 2 10 4 1 7-2 6-5M13 9c-2 0-3 3 0 4" stroke="#4a0010" strokeWidth="1.300" /></Icon>
      </button>
    </div>
  );
}

/* ------------------------------------------------------------------ */
/* Layers panel                                                        */
/* ------------------------------------------------------------------ */

function LayerCheck({ id, checked }: { id: string; checked: boolean }) {
  return (
    <span className="relative flex size-[14px] shrink-0">
      <input id={id} type="checkbox" defaultChecked={checked} className="peer size-[14px] appearance-none rounded-[3px] border border-[#c9c9c9] bg-white" />
      <svg viewBox="0 0 14 14" className="pointer-events-none absolute inset-0 hidden peer-checked:block" aria-hidden="true">
        <path d="M3.500 7.500l2.500 3 4.500-7" fill="none" stroke="#8d8d8d" strokeWidth="1.500" />
      </svg>
    </span>
  );
}

function LayerRow({ id, name, swatch, selected }: { id: string; name: string; swatch: ReactNode; selected?: boolean }) {
  return (
    <li className={selected ? "flex h-5 items-center bg-[#d0d0d0] pl-7" : "flex h-5 items-center pl-7"}>
      <LayerCheck id={id} checked />
      <span className="ml-3 flex w-[18px] shrink-0 items-center justify-center">{swatch}</span>
      <label htmlFor={id} className={selected ? "ml-[5px] truncate font-bold underline" : "ml-[5px] truncate font-bold"}>{name}</label>
    </li>
  );
}

function LayersPanel() {
  const round = "flex size-[14px] items-center justify-center rounded-full bg-[#4a4a4a]";
  return (
    <section aria-label="Layers Panel" className="flex w-[188px] shrink-0 flex-col border-r-2 border-[#999] bg-white">
      <header className="flex h-[25px] shrink-0 items-center border-b border-[#a0a0a0] bg-gradient-to-b from-[#ececec] to-[#cfcfcf] px-[3px]">
        <button type="button" aria-label="Close" className={round}>
          <svg width="8" height="8" viewBox="0 0 8 8"><path d="M1 1l6 6M7 1L1 7" stroke="#fff" strokeWidth="2" /></svg>
        </button>
        <button type="button" aria-label="Float" className={"ml-1.5 " + round}>
          <svg width="9" height="9" viewBox="0 0 9 9" fill="none" stroke="#fff"><path d="M3 3V1h5v4H6M1 3.500h5v4H1z" /></svg>
        </button>
        <h2 className="flex-1 pl-1 text-center text-[11px]">Layers Panel</h2>
      </header>
      <div role="toolbar" aria-label="Layers" className="flex h-[29px] shrink-0 items-center justify-between border-b border-[#999] bg-gradient-to-b from-[#eee] to-[#cbcbcb] pr-0.5 pl-1.5">
        <button type="button" aria-label="Layer styling">
          <svg width="15" height="15" viewBox="0 0 15 15"><path d="M9 6l5-5 1 1-5 5z" fill="#b97c1c" stroke="#7a5210" /><path d="M4 5l6 5-5 5-5-7z" fill="#f3c321" /><path d="M0 6l4-1 1 5-3 1z" fill="#e03428" /><path d="M4 11l4-3 1 3-4 4z" fill="#3d7fc4" /><path d="M8 5l3 4-2 2-4-5z" fill="#f28518" /></svg>
        </button>
        <button type="button" aria-label="Add group">
          <svg width="15" height="17" viewBox="0 0 15 17" fill="#eee" stroke="#777"><path d="M6 1h6v9H6zM3.500 3.500h6v9h-6zM1 6h6v9H1z" /><path d="M8 2v9" stroke="#3d6796" /><path d="M8 10h7v7H8z" fill="#4a9a5c" stroke="none" /><path d="M11.500 11v5M9 13.500h5" stroke="#fff" strokeWidth="1.500" /></svg>
        </button>
        <button type="button" aria-label="Manage visibility">
          <svg width="18" height="14" viewBox="0 0 18 14"><path d="M1 6q7-8 14 0-7 7-14 0z" fill="#fff" stroke="#777" /><circle cx="8" cy="6" r="3.500" fill="#5b8fc4" /><circle cx="8" cy="6" r="1.500" fill="#122" /><path d="M2 3q6-5 12 0" fill="none" stroke="#999" /><path d="M11 9h7l-3.500 4z" fill="#888" /></svg>
        </button>
        <button type="button" aria-label="Filter legend">
          <svg width="15" height="16" viewBox="0 0 15 16"><path d="M1 1h13v3L9 9v6H6V9L1 4z" fill="#5c92ca" stroke="#3b6a9c" /><path d="M1 0h13v3H1z" fill="#f4da20" stroke="#b79c10" strokeWidth="0.600" /></svg>
        </button>
        <button type="button" aria-label="Filter by expression" className="ml-1">
          <svg width="26" height="17" viewBox="0 0 26 17" fill="none"><path d="M8 3C6 0 1 1 2 4c0 1 2 2 4 2-4-1-5 2-4 4 1 2 5 1 7-1" stroke="#6c2c73" strokeWidth="1.700" /><path d="M7 8h8v2l-2 2v4h-3v-4L7 10z" fill="#b5b5b5" /><path d="M17 9h8l-4 7z" fill="#555" /></svg>
        </button>
        <button type="button" aria-label="More">
          <svg width="10" height="9" viewBox="0 0 10 9" fill="none" stroke="#777" strokeWidth="1.300"><path d="M1 1l3.500 3.500L1 8M5.500 1L9 4.500 5.500 8" /></svg>
        </button>
      </div>
      <ul className="min-h-0 flex-1 overflow-hidden text-[13px] leading-[18px]">
        <li className="flex h-[18px] items-center pl-[27px]">
          <svg width="15" height="15" viewBox="0 0 15 15" className="shrink-0"><rect x="0.500" y="0.500" width="14" height="14" rx="2" fill="#f2f2f2" stroke="#777" /><path d="M2 4.500h5M9 4.500h4M2 7.500h5M9 7.500h4M2 10.500h5M9 10.500h4" stroke="#777" /></svg>
          <span className="ml-1.5 font-bold">TotalPopulation_C…</span>
        </li>
        <li className="flex h-5 items-center pl-[7px]">
          <svg width="10" height="8" viewBox="0 0 10 8" className="mr-[11px] shrink-0"><path d="M0 0h10L5 8z" fill="#858585" /></svg>
          <LayerCheck id="layer-gpw" checked={false} />
          <svg width="16" height="16" viewBox="0 0 16 16" className="ml-[13px] shrink-0"><rect width="16" height="16" fill="#6b9ccd" /><path d="M0 0h5v5H0zM11 0h5v5h-5zM5 5h6v6H5zM0 11h5v5H0z" fill="#21405f" /><path d="M5 0h6v5H5zM11 11h5v5h-5z" fill="#8fb7de" /></svg>
          <label htmlFor="layer-gpw" className="ml-1.5 font-bold">gpw_v4_2010</label>
        </li>
        <li className="flex h-[18px] items-center pl-[46px]">
          <span className="size-4 shrink-0 bg-black" />
          <span className="ml-1.5">0</span>
        </li>
        <li className="flex h-[18px] items-center pl-[68px]">422.56</li>
        <LayerRow id="layer-admin-1" name="admin_0_cou…" swatch={<span className="size-4 border border-[#444] bg-white" />} />
        <LayerRow id="layer-places" name="populated_pla…" selected swatch={<span className="size-1.5 rounded-full border border-[#2b6b4b] bg-[#1f9a5a]" />} />
        <LayerRow id="layer-admin-2" name="admin_0_cou…" swatch={<span className="size-4 border border-[#444] bg-white" />} />
      </ul>
    </section>
  );
}

/* ------------------------------------------------------------------ */
/* Dialog                                                              */
/* ------------------------------------------------------------------ */

function Select({ id, value }: { id: string; value: string }) {
  return (
    <span className="flex h-[21px] min-w-0 flex-1 overflow-hidden rounded-[4px] border border-[#c4c4c4] border-b-[#a8a8a8] bg-white">
      <select id={id} defaultValue={value} className="min-w-0 flex-1 appearance-none bg-white pb-[3px] pl-2 leading-4 outline-none">
        <option>{value}</option>
      </select>
      <span aria-hidden="true" className="flex w-4 shrink-0 items-center justify-center bg-gradient-to-b from-[#dedede] to-[#cdcdcd]">
        <svg width="8" height="12" viewBox="0 0 8 12" fill="none" stroke="#fff" strokeWidth="1.500"><path d="M1 4l3-3 3 3M1 8l3 3 3-3" /></svg>
      </span>
    </span>
  );
}

function Check({ id, label, checked, muted }: { id: string; label: string; checked?: boolean; muted?: boolean }) {
  return (
    <div className={muted ? "flex h-4 items-start text-[#828282]" : "flex h-4 items-start"}>
      <span className="relative mt-0.5 flex size-[14px] shrink-0">
        <input id={id} type="checkbox" defaultChecked={checked} className="peer size-[14px] appearance-none rounded-[3px] border border-[#bdbdbd] bg-[#efefef]" />
        <svg viewBox="0 0 14 14" className="pointer-events-none absolute inset-0 hidden peer-checked:block" aria-hidden="true">
          <path d="M3.500 8l2.500 3 4.500-7" fill="none" stroke="#fff" strokeWidth="2" />
          <path d="M3 7.500l2.500 3 4.500-7" fill="none" stroke="#c4c4c4" strokeWidth="1" />
        </svg>
      </span>
      <label htmlFor={id} className="ml-1 leading-4">{label}</label>
    </div>
  );
}

function SaveDialog() {
  return (
    <div role="dialog" aria-labelledby="dialog-title" className="absolute top-[22px] bottom-0 left-[267px] flex w-[591px] flex-col overflow-hidden rounded-t-[5px] bg-[#ebebeb] text-[13px] leading-4">
      <div className="flex h-[22px] shrink-0 items-center border-b border-[#e0e0e0] bg-[#f6f6f6] px-2">
        <div className="flex gap-2">
          <button type="button" aria-label="Close dialog" className="size-3 rounded-full border border-[#cfcfcf] bg-[#dcdcdc]" />
          <button type="button" aria-label="Minimize dialog" className="size-3 rounded-full border border-[#cfcfcf] bg-[#dcdcdc]" />
          <button type="button" aria-label="Zoom dialog" className="size-3 rounded-full border border-[#cfcfcf] bg-[#dcdcdc]" />
        </div>
        <div className="flex flex-1 items-center justify-center gap-1.5 pr-[50px]">
          <svg width="13" height="15" viewBox="0 0 13 15" fill="none" aria-hidden="true"><path d="M3 2c5-2 8 1 7 6l2 5-3 1-2-2c-5 2-8-1-6-6z" fill="#dff08c" /><path d="M4 5c3-1 4 1 3 4l-2 1c-2 0-2-3-1-5z" fill="#f6f6f6" /><path d="M2 13L12 1" stroke="#3b8f4a" strokeWidth="1.800" /></svg>
          <h1 id="dialog-title" className="font-['Inter',sans-serif] text-[12px] text-[#a9a9a9]">Save vector layer as...</h1>
        </div>
      </div>

      <form className="flex min-h-0 flex-1 flex-col pt-8">
        <div className="flex flex-col pr-8 pl-8">
          <div className="flex items-center">
            <label htmlFor="format" className="w-[76px] shrink-0 pb-1">Format</label>
            <Select id="format" value="ESRI Shapefile" />
          </div>
          <div className="mt-[13px] flex items-center">
            <label htmlFor="file-name" className="w-[78px] shrink-0 pb-0.5">File name</label>
            <input id="file-name" type="text" className="h-5 min-w-0 flex-1 bg-white px-1 outline-none" />
            <button type="button" className="ml-[9px] h-[21px] w-[74px] shrink-0 rounded-[4px] border border-[#c4c4c4] border-b-[#a8a8a8] bg-white pb-[3px] leading-4">Browse</button>
          </div>
          <div className="mt-5 flex items-center">
            <label htmlFor="layer-name" className="w-[77px] shrink-0 pb-0.5">Layer name</label>
            <input id="layer-name" type="text" className="h-[21px] min-w-0 flex-1 border border-[#d0d0d0] bg-white px-1 outline-none" />
          </div>
          <div className="mt-3 flex items-center">
            <label htmlFor="crs" className="w-[79px] shrink-0 pb-0.5">CRS</label>
            <Select id="crs" value="Selected CRS (EPSG:54009, World_Mollweide)" />
            <button type="button" aria-label="Select CRS" className="ml-px flex size-[26px] shrink-0 items-center justify-center border border-[#cbcbcb]">
              <svg width="16" height="16" viewBox="0 0 16 16"><circle cx="7.500" cy="8" r="7" fill="#a6cdf0" stroke="#7f9cb8" strokeWidth="0.800" /><path d="M0.500 8a7 7 0 0 1 14 0z" fill="#9a9a9a" /><path d="M0.500 8h14M2 4h11M7.500 1v14M4 2v11M11 2v11" stroke="#eee" strokeWidth="0.600" /><rect x="8" y="8" width="8" height="7" rx="1" fill="#d8aa0c" /><path d="M10 13.500l4-4" stroke="#fff" strokeWidth="1.600" /></svg>
            </button>
          </div>
        </div>

        <div className="mt-[27px] mr-5 ml-5 flex min-h-0 flex-1 border border-b-0 border-[#a0a0a0]">
          <div className="min-w-0 flex-1 overflow-hidden pt-[13px] pr-[15px] pl-3">
            <div className="flex items-center">
              <label htmlFor="encoding" className="w-[257px] shrink-0 pb-[3px]">Encoding</label>
              <Select id="encoding" value="System" />
            </div>
            <div className="mt-2.5">
              <Check id="only-selected" label="Save only selected features" checked />
            </div>
            <button type="button" aria-expanded="false" className="flex h-[14px] items-center pl-1.5 font-bold leading-[14px] text-[#1c1c1c]">
              <svg width="8" height="10" viewBox="0 0 8 10" className="mr-2"><path d="M0 0l8 5-8 5z" fill="#333" /></svg>
              Select fields to export and their export options
            </button>
            <div className="mt-[17px]">
              <Check id="add-to-map" label="Add saved file to map" checked />
            </div>
            <div className="mt-2.5 flex items-center">
              <label htmlFor="symbology" className="w-[257px] shrink-0 pb-[3px]">Symbology export</label>
              <Select id="symbology" value="No symbology" />
            </div>
            <div className="mt-[14px] flex items-center text-[#444]">
              <label htmlFor="scale" className="w-[260px] shrink-0 pb-[3px]">Scale</label>
              <input id="scale" type="text" defaultValue="1:50000" className="h-[22px] min-w-0 flex-1 border border-[#d0d0d0] bg-white px-0.5 pb-0.5 outline-none" />
              <button type="button" aria-label="Step scale" className="-mr-px ml-1 flex h-[22px] w-3 shrink-0 items-center justify-center rounded-full border border-[#cfcfcf] bg-[#f8f8f8]">
                <svg width="6" height="14" viewBox="0 0 6 14" fill="none" stroke="#777" strokeWidth="1.300"><path d="M0.500 4L3 1.500 5.500 4M0.500 10L3 12.500 5.500 10" /></svg>
              </button>
            </div>
            <button type="button" aria-expanded="true" className="mt-0.5 flex h-4 items-center pl-[3px] font-bold text-[#1c1c1c]">
              <svg width="11" height="7" viewBox="0 0 11 7" className="mr-2"><path d="M0 0h11L5.500 7z" fill="#333" /></svg>
              Geometry
            </button>
            <div role="group" aria-label="Geometry" className="-mr-0.5 mt-0.5 h-40 rounded-[5px] border border-[#b5b5b5] bg-[#e3e3e3] pt-[14px] pr-[15px] pl-3">
              <div className="flex items-center">
                <label htmlFor="geometry-type" className="w-[244px] shrink-0 pb-[3px]">Geometry type</label>
                <Select id="geometry-type" value="Automatic" />
              </div>
              <div className="mt-2.5 flex flex-col gap-0.5">
                <Check id="force-multi" label="Force multi-type" muted />
                <Check id="include-z" label="Include z-dimension" muted />
              </div>
            </div>
          </div>
          <div className="w-[14px] shrink-0 border-l border-[#e0e0e0] bg-[#fafafa] pt-px pl-0.5">
            <div className="h-full w-2 rounded-t-full bg-[#c1c1c1]" />
          </div>
        </div>
      </form>
    </div>
  );
}

export default function App() {
  return (
    <div className="relative flex h-screen flex-col overflow-hidden bg-white font-['Liberation_Sans',Arial,sans-serif] text-black">
      <MainToolbar />
      <EditToolbar />
      <main className="flex min-h-0 flex-1">
        <SideToolbar />
        <LayersPanel />
        <div className="flex min-w-0 flex-1 overflow-hidden">
          <MapView />
        </div>
      </main>
      <div className="pointer-events-none absolute top-[22px] bottom-0 left-[267px] w-[591px] rounded-t-[5px] shadow-[0_8px_24px_rgba(0,0,0,0.35)]" />
      <SaveDialog />
      <div aria-hidden="true" className="pointer-events-none absolute top-[272px] left-[288px] size-10 rounded-full border-4 border-[#ff45f5]" />
    </div>
  );
}
